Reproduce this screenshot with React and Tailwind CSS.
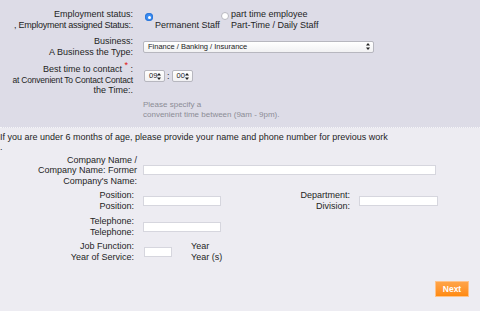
import React from 'react'

const Radio = ({ checked, className = '' }) =>
    checked ? (
        <span className={`mt-[4px] flex h-[8px] w-[8px] shrink-0 items-center justify-center rounded-full bg-[#3a8cf2] shadow-[inset_0_0_0_1px_#2f78d8] ${className}`}>
            <span className="h-[3px] w-[3px] rounded-full bg-white" />
        </span>
    ) : (
        <span className={`mt-[3px] h-[8px] w-[8px] shrink-0 rounded-full border border-[#b8b8c0] bg-white ${className}`} />
    )

const Arrows = () => (
    <svg width="4" height="7" viewBox="0 0 4 7" className="shrink-0">
        <path d="M2 0 L4 2.6 L0 2.6 Z" fill="#222" />
        <path d="M2 7 L4 4.4 L0 4.4 Z" fill="#222" />
    </svg>
)

const Select = ({ value, className }) => (
    <div className={`flex h-[12px] items-center justify-between rounded-[2px] border border-[#b7b7bf] bg-gradient-to-b from-white to-[#f1f1f3] pl-[4px] pr-[3px] text-[7.5px] leading-none text-[#222] ${className}`}>
        <span>{value}</span>
        <Arrows />
    </div>
)

const Input = ({ className }) => (
    <div className={`h-[10px] shrink-0 border border-[#d6d6de] bg-white ${className}`} />
)

const App = () => {
    return (
        <div className="h-[311px] w-[480px] overflow-hidden whitespace-nowrap bg-[#edecf2] font-['Liberation_Sans',Arial,sans-serif] text-[9px] leading-[10.5px] text-[#1e1e1e]">

            {/* Top Section */}
            <div className="border-b border-dotted border-[#f6f6f9] bg-[#dddce7] pt-[9px] pb-[6px]">

                <div className="flex">
                    <div className="w-[133px] shrink-0 text-right">
                        Employment status:<br />
                        <span className="tracking-[-0.25px]">, Employment assigned Status:.</span>
                    </div>
                    <div className="ml-[12px] flex">
                        <Radio checked />
                        <div className="ml-[2px]">
                            &nbsp;<br />Permanent Staff
                        </div>
                        <Radio className="ml-[1px]" />
                        <div className="ml-[2px]">
                            part time employee<br />Part-Time / Daily Staff
                        </div>
                    </div>
                </div>

                <div className="mt-[6px] flex items-center">
                    <div className="w-[133px] shrink-0 text-right">
                        Business:<br />A Business the Type:
                    </div>
                    <Select value="Finance / Banking / Insurance" className="ml-[10px] w-[231px]" />
                </div>

                <div className="mt-[7px] flex items-start">
                    <div className="w-[133px] shrink-0 text-right">
                        Best time to contact <sup className="text-[9px] text-[#e01010]">*</sup> :<br />
                        <span className="text-[8.5px] tracking-[-0.2px]">at Convenient To Contact Contact</span><br />
                        the Time:.
                    </div>
                    <div className="ml-[11px] mt-[6px] flex items-center">
                        <Select value="09" className="w-[21px]" />
                        <span className="mx-[2px]">:</span>
                        <Select value="00" className="w-[21px]" />
                    </div>
                </div>

                <div className="ml-[143px] mt-[4px] text-[8px] text-[#8c8c96]">
                    Please specify a<br />convenient time between (9am - 9pm).
                </div>
            </div>

            {/* Previous Work */}
            <div className="pt-[4px]">
                <p>
                    If you are under 6 months of age, please provide your name and phone number for previous work<br />.
                </p>

                <div className="mt-[2px] flex items-center">
                    <div className="w-[137px] shrink-0 text-right">
                        Company Name /<br />Company Name: Former<br />Company's Name:
                    </div>
                    <Input className="ml-[6px] w-[293px]" />
                </div>

                <div className="mt-[4px] flex items-center">
                    <div className="w-[134px] shrink-0 text-right">
                        Position:<br />Position:
                    </div>
                    <Input className="ml-[9px] w-[78px]" />
                    <div className="w-[129px] shrink-0 text-right">
                        Department:<br />Division:
                    </div>
                    <Input className="ml-[9px] w-[79px]" />
                </div>

                <div className="mt-[5px] flex items-center">
                    <div className="w-[134px] shrink-0 text-right">
                        Telephone:<br />Telephone:
                    </div>
                    <Input className="ml-[9px] w-[78px]" />
                </div>

                <div className="mt-[4px] flex items-center">
                    <div className="w-[134px] shrink-0 text-right">
                        Job Function:<br />Year of Service:
                    </div>
                    <Input className="ml-[10px] w-[28px]" />
                    <div className="ml-[19px]">
                        Year<br />Year (s)
                    </div>
                </div>

                <div className="mt-[19px] flex justify-end pr-[11px]">
                    <button className="h-[16px] w-[34px] border border-[#ffc38a] bg-gradient-to-b from-[#ffa447] to-[#ff8a0c] text-[8.5px] font-bold leading-none text-white">
                        Next
                    </button>
                </div>
            </div>

        </div>
    )
}

export default App
